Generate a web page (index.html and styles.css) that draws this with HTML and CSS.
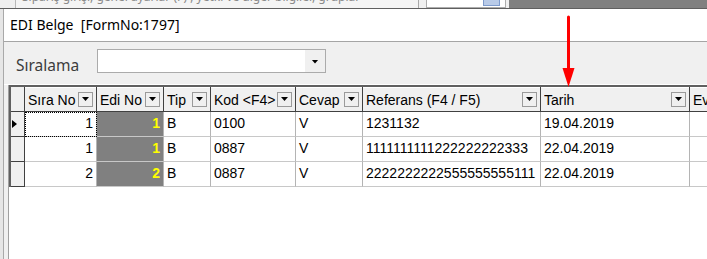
FILE: index.html
```html
<!DOCTYPE html>
<html lang="tr">
<head>
<meta charset="utf-8">
<title>EDI Belge</title>
<link rel="stylesheet" href="styles.css">
</head>
<body>
<div class="top">
  <div class="top-a"></div>
  <div class="top-text"><span>Sipariş girişi, genel ayarlar (F) ; yetki ve diğer bilgiler, gruplar</span></div>
  <div class="top-b"></div>
  <div class="top-field"><span class="top-btn"></span></div>
  <div class="top-c"></div>
  <div class="top-dark"></div>
</div>
<div class="form">
  <div class="title">EDI Belge  [FormNo:1797]</div>
  <div class="panel">
    <span class="lbl">Sıralama</span>
    <div class="combo"><div class="combo-btn"><span class="tri"></span></div></div>
  </div>
  <div class="gridarea">
    <div class="grid">
      <div class="row head">
        <div class="ind"></div>
        <div class="hc"><span class="ht">Sıra No</span><span class="db"><span class="tri"></span></span></div>
        <div class="hc"><span class="ht">Edi No</span><span class="db"><span class="tri"></span></span></div>
        <div class="hc"><span class="ht">Tip</span><span class="db"><span class="tri"></span></span></div>
        <div class="hc"><span class="ht">Kod &lt;F4&gt;</span><span class="db"><span class="tri"></span></span></div>
        <div class="hc"><span class="ht">Cevap</span><span class="db"><span class="tri"></span></span></div>
        <div class="hc"><span class="ht">Referans (F4 / F5)</span><span class="db"><span class="tri"></span></span></div>
        <div class="hc"><span class="ht">Tarih</span><span class="db"><span class="tri"></span></span></div>
        <div class="hc"><span class="ht">Evrak</span><span class="db"><span class="tri"></span></span></div>
      </div>
      <div class="row">
        <div class="ind"><span class="cur"></span></div>
        <div class="c num focus">1</div>
        <div class="c num edi">1</div>
        <div class="c">B</div>
        <div class="c">0100</div>
        <div class="c">V</div>
        <div class="c">1231132</div>
        <div class="c">19.04.2019</div>
        <div class="c"></div>
      </div>
      <div class="row">
        <div class="ind"></div>
        <div class="c num">1</div>
        <div class="c num edi">1</div>
        <div class="c">B</div>
        <div class="c">0887</div>
        <div class="c">V</div>
        <div class="c">1111111111222222222333</div>
        <div class="c">22.04.2019</div>
        <div class="c"></div>
      </div>
      <div class="row">
        <div class="ind"></div>
        <div class="c num">2</div>
        <div class="c num edi">2</div>
        <div class="c">B</div>
        <div class="c">0887</div>
        <div class="c">V</div>
        <div class="c">2222222222555555555111</div>
        <div class="c">22.04.2019</div>
        <div class="c"></div>
      </div>
    </div>
  </div>
</div>
<svg class="arrow" width="20" height="74" viewBox="0 0 20 74">
  <line x1="8.5" y1="2" x2="8.5" y2="56" stroke="#ff0000" stroke-width="3" stroke-linecap="round"/>
  <polygon points="2.5,53 14.5,53 8.5,72" fill="#ff0000"/>
</svg>
</body>
</html>
```
FILE: styles.css
```css
html, body {
  margin: 0;
  padding: 0;
}
body {
  width: 707px;
  height: 259px;
  overflow: hidden;
  background: #e6e6e6;
  font-family: "Liberation Sans", Arial, sans-serif;
  display: flex;
  flex-direction: column;
  position: relative;
}
.top {
  height: 8px;
  display: flex;
  border-bottom: 1px solid #5f5f5f;
  flex: 0 0 auto;
}
.top-a {
  width: 15px;
  background: #f0f0f0;
  border-right: 1px solid #b8b8b8;
}
.top-text {
  width: 402px;
  background: #f4f4f4;
  overflow: hidden;
  position: relative;
  border-right: 1px solid #a8a8a8;
}
.top-text span {
  position: absolute;
  left: 6px;
  top: -12px;
  font-family: "Noto Sans", sans-serif;
  font-size: 12px;
  color: #8a8a8a;
  white-space: nowrap;
}
.top-b {
  width: 7px;
  background: #f0f0f0;
}
.top-field {
  width: 78px;
  background: #fff;
  border: 1px solid #adadad;
  border-top: 0;
  position: relative;
}
.top-btn {
  position: absolute;
  left: 56px;
  bottom: 1px;
  width: 15px;
  height: 5px;
  background: #b9cbe8;
  border: 1px solid #7e9bcc;
  border-top: 0;
}
.top-c {
  width: 3px;
  background: #f0f0f0;
}
.top-dark {
  flex: 1;
  background: #808080;
}
.form {
  flex: 1;
  margin-left: 3px;
  border-left: 1px solid #a9a9a9;
  background: #f0f0f0;
  display: flex;
  flex-direction: column;
}
.title {
  height: 32px;
  line-height: 32px;
  background: #fff;
  border-bottom: 1px solid #a5a5a5;
  padding-left: 6px;
  font-family: "Noto Sans", sans-serif;
  font-size: 14px;
  color: #000;
  white-space: pre;
}
.panel {
  display: flex;
  align-items: flex-start;
  padding-left: 12px;
  box-sizing: border-box;
  height: 43px;
  border-bottom: 1px solid #fff;
}
.lbl {
  flex: 0 0 81px;
  font-family: "Noto Sans", sans-serif;
  font-size: 15.5px;
  color: #3c3c3c;
  margin-top: 12px;
  line-height: 22px;
}
.combo {
  margin-top: 7px;
  width: 229px;
  height: 24px;
  box-sizing: border-box;
  background: #fff;
  border: 1px solid #ababab;
  display: flex;
  justify-content: flex-end;
}
.combo-btn {
  width: 20px;
  background: #f0f0f0;
  display: flex;
  align-items: center;
  justify-content: center;
  padding-top: 1px;
  box-sizing: border-box;
}
.tri {
  display: block;
  width: 7px;
  height: 4px;
  background: #000;
  clip-path: polygon(0 0, 100% 0, 50% 100%);
}
.gridarea {
  flex: 1;
  margin-left: 4px;
  border-left: 1px solid #a0a0a0;
  background: #fff;
  overflow: hidden;
}
.grid {
  width: 900px;
  border-top: 2px solid #606060;
  border-left: 2px solid #606060;
  font-size: 14px;
  color: #000;
}
.row {
  display: grid;
  grid-template-columns: 14px 72px 67px 47px 85px 67px 178px 149px 200px;
  height: 25px;
}
.row > div {
  box-sizing: border-box;
  border-right: 1px solid #b4b4b4;
  border-bottom: 1px solid #c8c8c8;
  min-width: 0;
  overflow: hidden;
  white-space: nowrap;
}
.row > .ind {
  background: #f0f0f0;
  border-right: 1px solid #404040;
  border-bottom: 1px solid #404040;
  display: flex;
  align-items: center;
  padding-left: 1px;
}
.cur {
  width: 0;
  height: 0;
  border-left: 5px solid #000;
  border-top: 4.5px solid transparent;
  border-bottom: 4.5px solid transparent;
}
.head > .hc {
  background: #f0f0f0;
  border-right: 1px solid #404040;
  border-bottom: 1px solid #404040;
  box-shadow: inset 0 1px 0 #fff;
  display: flex;
  align-items: center;
  padding-left: 3px;
  padding-top: 2px;
}
.ht {
  flex: 1;
  min-width: 0;
  overflow: hidden;
}
.db {
  flex: 0 0 auto;
  width: 15px;
  height: 15px;
  box-sizing: border-box;
  margin-right: 3px;
  margin-top: -2px;
  border: 1px solid #9a9a9a;
  background: #f0f0f0;
  display: flex;
  align-items: center;
  justify-content: center;
}
.c {
  display: flex;
  align-items: center;
  padding: 0 3px 2px 3px;
}
.c.num {
  justify-content: flex-end;
}
.c.edi {
  background: #808080;
  color: #ffff00;
  font-weight: bold;
}
.c.focus {
  outline: 1px dotted #000;
  outline-offset: -1px;
}
.arrow {
  position: absolute;
  left: 560px;
  top: 15px;
}
```
